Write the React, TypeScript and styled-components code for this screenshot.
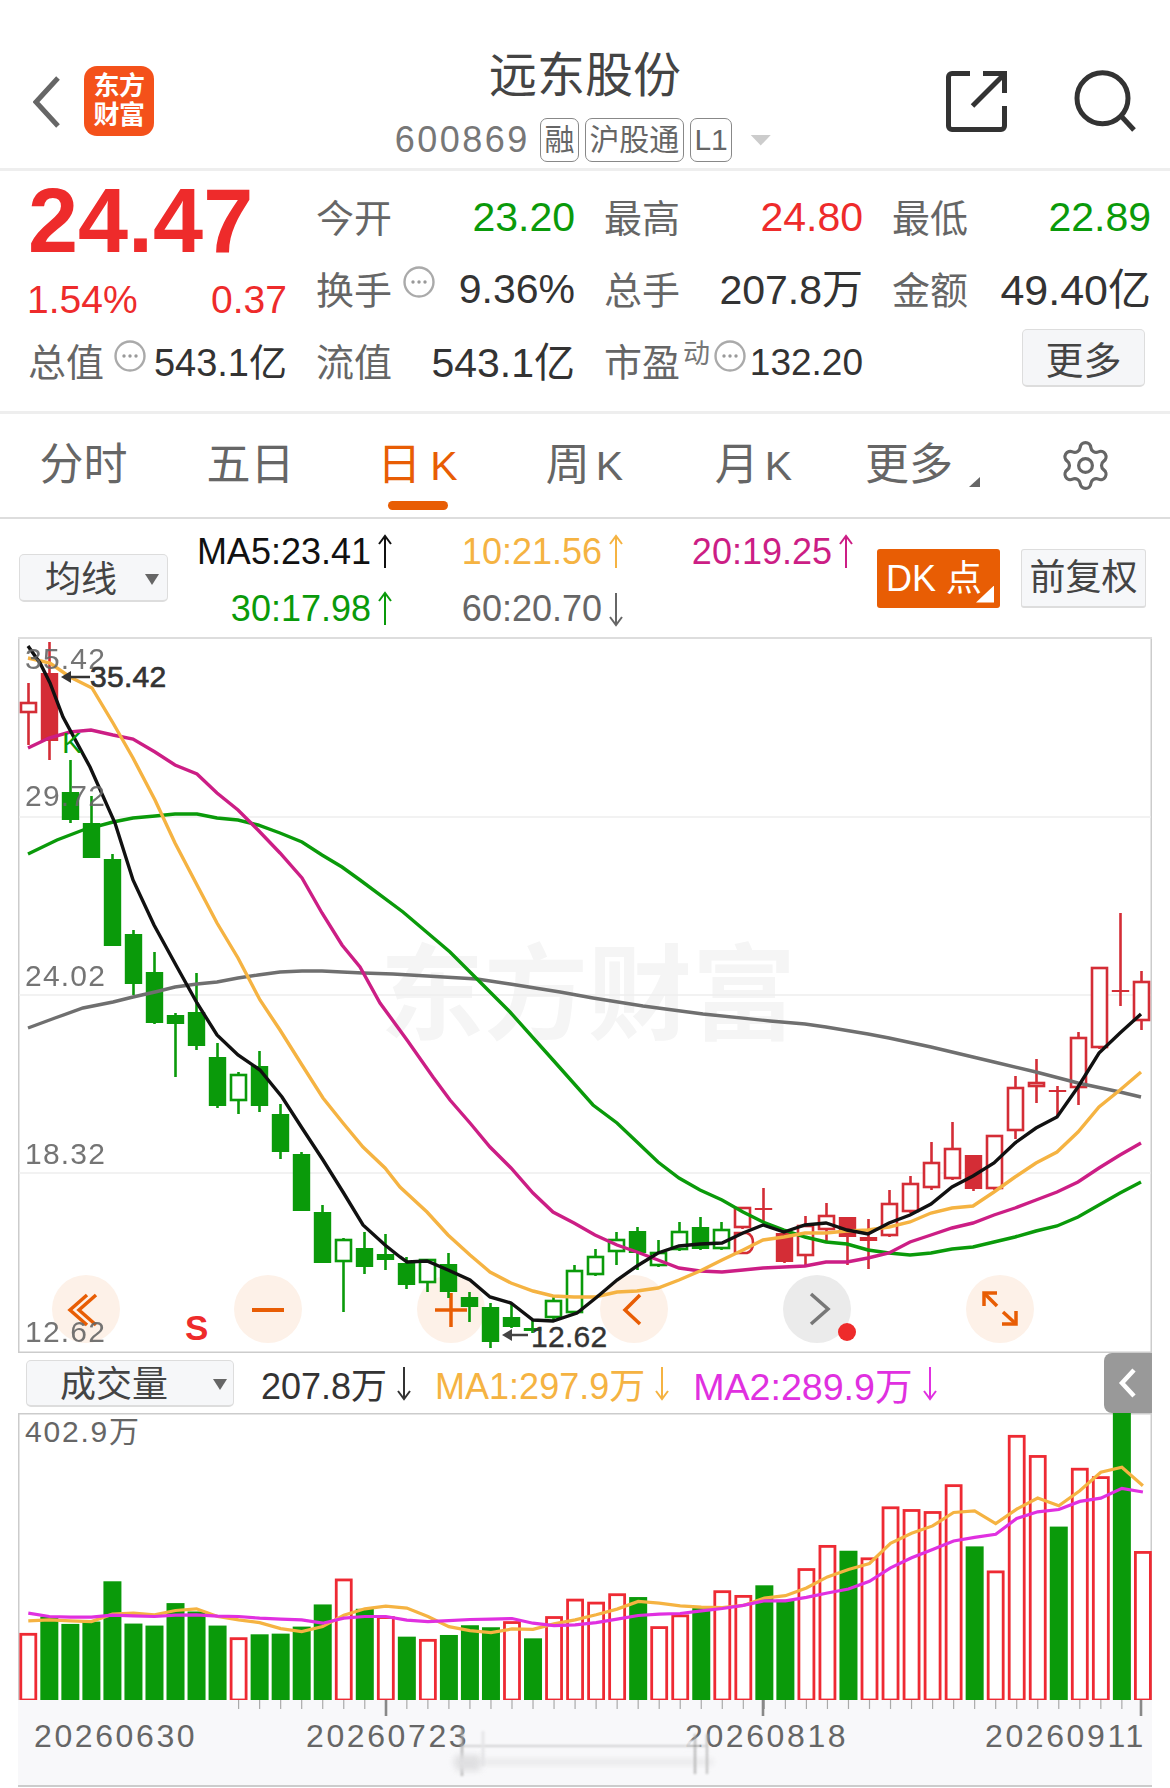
import React from "react";
import styled, { createGlobalStyle } from "styled-components";
import { Settings } from "lucide-react";

const FONT = `"Liberation Sans", "Noto Sans CJK SC", sans-serif`;
const ORANGE = "#e85d04";
const GREEN = "#0a9a0a";
const RED = "#ee2b2b";
const MA_ORANGE = "#f5b342";
const MA_PINK = "#cc1e85";
const MA_VIOLET = "#e030e0";

const GlobalStyle = createGlobalStyle`
  html, body { margin: 0; padding: 0; background: #fff; }
  body { font-family: ${FONT}; }
  * { box-sizing: border-box; }
`;

const Page = styled.div`
  width: 1170px;
  height: 1788px;
  background: #fff;
  overflow: hidden;
  color: #333;
`;

/* ---------- header ---------- */
const Header = styled.header`
  height: 171px;
  padding-top: 51px;
  display: grid;
  grid-template-columns: 1fr auto 1fr;
  border-bottom: 3px solid #eee;
`;
const HeaderLeft = styled.div`
  display: flex;
  align-items: flex-start;
  padding-left: 33px;
  gap: 24px;
`;
const BackIcon = styled.svg`
  margin-top: 25px;
  width: 27px;
  height: 52px;
`;
const Logo = styled.div`
  margin-top: 15px;
  width: 70px;
  height: 70px;
  border-radius: 13px;
  background: #f4511a;
  color: #fff;
  font-size: 26px;
  line-height: 29px;
  font-weight: 700;
  display: flex;
  flex-direction: column;
  align-items: center;
  justify-content: center;
  letter-spacing: -0.5px;
`;
const TitleBlock = styled.div`
  display: flex;
  flex-direction: column;
  align-items: center;
`;
const Title = styled.h1`
  margin: 0;
  font-size: 48px;
  line-height: 50px;
  font-weight: 400;
  color: #444;
`;
const CodeRow = styled.div`
  margin: 17px 0 0 -4px;
  display: flex;
  align-items: center;
  gap: 6px;
`;
const Code = styled.span`
  font-size: 36px;
  letter-spacing: 2.5px;
  color: #777;
  margin-right: 4px;
`;
const Badge = styled.span`
  height: 44px;
  border: 1.5px solid #888;
  border-radius: 7px;
  font-size: 30px;
  line-height: 41px;
  padding: 0 3.5px;
  color: #666;
`;
const DropTriangle = styled.span`
  width: 21px;
  height: 11px;
  margin-left: 12px;
  background: #ccc;
  clip-path: polygon(0 0, 100% 0, 50% 100%);
`;
const HeaderRight = styled.div`
  display: flex;
  justify-content: flex-end;
  gap: 60px;
  padding: 14px 30px 0 0;
`;
const HeaderIcon = styled.svg`
  width: 70px;
  height: 70px;
`;

/* ---------- quote ---------- */
const Quote = styled.section`
  height: 243px;
  padding: 10px 0 0 28px;
  display: grid;
  grid-template-columns: repeat(4, 259px);
  column-gap: 29px;
  grid-auto-rows: 72px;
  border-bottom: 3px solid #eee;
`;
const Price = styled.div`
  font-size: 90px;
  font-weight: 700;
  line-height: 71px;
  color: ${RED};
  padding-top: 5px;
`;
const ChangeCell = styled.div`
  display: flex;
  justify-content: space-between;
  align-items: center;
  padding-top: 22px;
  margin-left: -1px;
  font-size: 39px;
  color: ${RED};
`;
const Cell = styled.div`
  display: flex;
  justify-content: space-between;
  align-items: center;
`;
const LabelGroup = styled.div`
  display: flex;
  align-items: center;
`;
const Label = styled.span`
  font-size: 38px;
  color: #666;
  white-space: nowrap;
  transform: translateY(-2.5px);
`;
const Value = styled.span<{ $color?: string; $size?: number; $shift?: number }>`
  font-size: ${(p) => p.$size ?? 41}px;
  color: ${(p) => p.$color ?? "#333"};
  white-space: nowrap;
  transform: translateY(${(p) => p.$shift ?? 0}px);
`;
const InfoIcon = styled.svg<{ $left: number; $lift: number }>`
  width: 32px;
  height: 32px;
  margin-left: ${(p) => p.$left}px;
  margin-bottom: ${(p) => p.$lift}px;
`;
const SupMark = styled.span`
  font-size: 27px;
  color: #777;
  margin: 0 4px 20px 3px;
`;
const MoreButton = styled.button`
  justify-self: end;
  align-self: start;
  margin: 4px 6px 0 0;
  width: 123px;
  height: 58px;
  background: #f5f6f8;
  border: 1.5px solid #ddd;
  border-bottom-width: 2.5px;
  border-radius: 5px;
  font: 38px ${FONT};
  color: #444;
  padding: 0;
`;

/* ---------- tabs ---------- */
const Tabs = styled.nav`
  height: 105px;
  display: grid;
  grid-template-columns: repeat(7, 167px);
  padding-top: 31px;
  border-bottom: 2.5px solid #ddd;
`;
const Tab = styled.div<{ $nudge?: number }>`
  display: flex;
  flex-direction: column;
  align-items: center;
  margin-left: ${(p) => p.$nudge ?? 0}px;
`;
const TabLabel = styled.div<{ $active?: boolean }>`
  display: flex;
  align-items: baseline;
  height: 40px;
  line-height: 40px;
  font-size: 44px;
  color: ${(p) => (p.$active ? ORANGE : "#666")};
`;
const TabK = styled.span<{ $gap: number }>`
  font-size: 41px;
  margin-left: ${(p) => p.$gap}px;
`;
const TabCorner = styled.span`
  align-self: flex-end;
  width: 11px;
  height: 10px;
  margin: 0 0 -2px 16px;
  background: #666;
  clip-path: polygon(100% 0, 100% 100%, 0 100%);
`;
const TabMark = styled.div`
  margin-top: 16px;
  width: 60px;
  height: 9px;
  border-radius: 4.5px;
  background: ${ORANGE};
`;
const GearSlot = styled.div`
  display: flex;
  justify-content: center;
  margin-top: -7px;
  color: #666;
`;

/* ---------- legend ---------- */
const LegendBar = styled.div`
  height: 118px;
  display: flex;
  align-items: center;
  padding: 0 0 0 19px;
`;
const SelectBox = styled.div<{ $w: number; $h: number; $pad: number }>`
  width: ${(p) => p.$w}px;
  height: ${(p) => p.$h}px;
  background: #f6f7f9;
  border: 1.5px solid #ddd;
  border-bottom-width: 2.5px;
  border-radius: 5px;
  font-size: 36px;
  line-height: 42px;
  color: #444;
  padding: 4px 0 0 ${(p) => p.$pad}px;
  display: flex;
  align-items: center;
  flex: none;
`;
const SelectCaret = styled.span<{ $left: number }>`
  width: 14px;
  height: 11px;
  margin-left: ${(p) => p.$left}px;
  background: #666;
  clip-path: polygon(0 0, 100% 0, 50% 100%);
`;
const Legend = styled.div`
  width: 687px;
  margin-top: 4px;
  display: grid;
  grid-template-columns: 226px 231px 230px;
  grid-auto-rows: 57px;
`;
const LegendItem = styled.div<{ $color: string }>`
  display: flex;
  justify-content: flex-end;
  align-items: center;
  gap: 5px;
  font-size: 36px;
  color: ${(p) => p.$color};
  white-space: nowrap;
`;
const ArrowSvg = styled.svg`
  width: 18px;
  height: 36px;
  flex: none;
`;
const DkButton = styled.div`
  position: relative;
  margin-left: 22px;
  width: 123px;
  height: 59px;
  background: ${ORANGE};
  border-radius: 3px;
  color: #fff;
  font-size: 36px;
  line-height: 59px;
  padding-left: 9px;
  white-space: nowrap;
  &::after {
    content: "";
    position: absolute;
    right: 6px;
    bottom: 5px;
    width: 18px;
    height: 17px;
    background: #fff;
    clip-path: polygon(100% 0, 100% 100%, 0 100%);
  }
`;
const AdjustButton = styled.div`
  margin-left: 21px;
  width: 125px;
  height: 59px;
  background: #f6f7f9;
  border: 1.5px solid #ddd;
  border-bottom-width: 2.5px;
  border-radius: 3px;
  font-size: 36px;
  line-height: 55px;
  text-align: center;
  color: #444;
`;

/* ---------- price chart ---------- */
const ChartBox = styled.div`
  position: relative;
  margin-left: 18px;
  width: 1134px;
  height: 716px;
  box-shadow: inset 0 2px 0 #ddd, inset 1.5px 0 0 #ccc, inset -1.5px 0 0 #ccc, inset 0 -1.5px 0 #ccc;
`;
const ChartSvg = styled.svg`
  display: block;
  position: relative;
  z-index: 1;
`;
const RoundButton = styled.div<{ $x: number; $gray?: boolean }>`
  position: absolute;
  left: ${(p) => p.$x}px;
  top: 638px;
  width: 68px;
  height: 68px;
  border-radius: 50%;
  background: ${(p) => (p.$gray ? "#ebebeb" : "#fdf1e8")};
`;
const RoundIcon = styled.svg`
  display: block;
  width: 68px;
  height: 68px;
`;
const AxisText = styled.text`
  font-family: ${FONT};
  font-size: 30px;
  letter-spacing: 1.2px;
  fill: #666;
  opacity: 0.9;
`;
const MarkText = styled.text`
  font-family: ${FONT};
  font-size: 30px;
  fill: #333;
  letter-spacing: 0.3px;
`;
const SignalText = styled.text<{ $color: string; $size: number; $bold?: boolean }>`
  font-family: ${FONT};
  font-size: ${(p) => p.$size}px;
  font-weight: ${(p) => (p.$bold ? 700 : 400)};
  fill: ${(p) => p.$color};
`;
const Watermark = styled.text`
  font-family: ${FONT};
  font-size: 104px;
  font-weight: 700;
  fill: #f5f5f5;
`;

/* ---------- volume ---------- */
const VolumeBar = styled.div`
  position: relative;
  height: 60px;
  width: 1152px;
  display: flex;
  align-items: center;
  padding-left: 26px;
`;
const VolumeItem = styled.div<{ $color: string; $left: number; $size?: number }>`
  display: flex;
  align-items: center;
  gap: 8px;
  margin-left: ${(p) => p.$left}px;
  font-size: ${(p) => p.$size ?? 36}px;
  color: ${(p) => p.$color};
  white-space: nowrap;
`;
const CollapseTab = styled.div`
  position: absolute;
  right: 0;
  top: 0;
  z-index: 2;
  width: 48px;
  height: 60px;
  background: #999;
  border-radius: 8px 0 0 8px;
  display: flex;
  align-items: center;
  justify-content: center;
`;
const CollapseIcon = styled.svg`
  width: 20px;
  height: 32px;
`;
const VolumeBox = styled.div`
  margin-left: 18px;
  width: 1134px;
  height: 287px;
  box-shadow: inset 0 1.5px 0 #ccc, inset 1.5px 0 0 #ccc, inset -1.5px 0 0 #ccc;
`;
const VolumeSvg = styled.svg`
  display: block;
`;
const VolumeMax = styled.text`
  font-family: ${FONT};
  font-size: 30px;
  letter-spacing: 1.8px;
  fill: #666;
`;
const AxisFooter = styled.footer`
  position: relative;
  margin-left: 18px;
  width: 1134px;
  height: 87px;
  background: #f8f8fa;
  border-bottom: 2px solid #ccc;
`;
const TicksSvg = styled.svg`
  display: block;
`;
const Dates = styled.div`
  margin-top: 2px;
  padding-left: 16px;
  display: grid;
  grid-template-columns: 272px 379px 300px auto;
  font-size: 32px;
  line-height: 34px;
  letter-spacing: 2.6px;
  color: #666;
`;
const Slider = styled.svg`
  position: absolute;
  left: 424px;
  top: 21px;
  width: 300px;
  height: 64px;
  opacity: 0.85;
`;

/* ---------- data ---------- */
type Candle = [number, number, number, number, "r" | "R" | "g" | "G"]; // wickTop, bodyTop, bodyBottom, wickBottom, kind (upper = filled)
const candles: Candle[] = [
  [683, 702, 713, 745, "r"], [642, 673, 741, 760, "R"], [760, 792, 820, 823, "G"], [796, 823, 858, 858, "G"],
  [854, 859, 946, 946, "G"], [930, 934, 984, 995, "G"], [952, 972, 1023, 1024, "G"], [1013, 1015, 1024, 1077, "G"],
  [973, 1012, 1046, 1050, "G"], [1043, 1057, 1106, 1108, "G"], [1072, 1074, 1101, 1114, "g"], [1051, 1066, 1106, 1112, "G"],
  [1104, 1114, 1152, 1159, "G"], [1152, 1154, 1211, 1211, "G"], [1205, 1212, 1263, 1263, "G"], [1238, 1239, 1262, 1312, "g"],
  [1232, 1248, 1267, 1274, "G"], [1234, 1254, 1260, 1270, "G"], [1257, 1263, 1285, 1289, "G"], [1259, 1259, 1283, 1292, "g"],
  [1253, 1264, 1292, 1298, "G"], [1292, 1297, 1307, 1322, "G"], [1303, 1307, 1342, 1348, "G"], [1303, 1317, 1327, 1328, "G"],
  [1320, 1328, 1331, 1333, "G"], [1297, 1300, 1318, 1322, "g"], [1265, 1270, 1313, 1314, "g"], [1249, 1256, 1275, 1276, "g"],
  [1232, 1239, 1252, 1265, "g"], [1227, 1231, 1253, 1270, "G"], [1240, 1252, 1266, 1267, "g"], [1222, 1231, 1250, 1251, "g"],
  [1217, 1227, 1249, 1250, "G"], [1222, 1229, 1249, 1250, "g"], [1207, 1207, 1228, 1229, "r"], [1188, 1208, 1210, 1222, "R"],
  [1233, 1233, 1262, 1263, "R"], [1216, 1225, 1256, 1267, "r"], [1203, 1215, 1230, 1243, "r"], [1217, 1217, 1237, 1265, "R"],
  [1219, 1237, 1241, 1269, "R"], [1190, 1203, 1236, 1237, "r"], [1176, 1183, 1212, 1213, "r"], [1142, 1162, 1188, 1190, "r"],
  [1122, 1148, 1179, 1180, "r"], [1155, 1155, 1189, 1191, "R"], [1135, 1135, 1189, 1190, "r"], [1076, 1087, 1131, 1139, "r"],
  [1059, 1082, 1087, 1103, "r"], [1086, 1090, 1092, 1117, "R"], [1032, 1037, 1088, 1105, "r"], [967, 967, 1048, 1049, "r"],
  [913, 990, 992, 1006, "R"], [971, 981, 1021, 1030, "r"],
];

const pts = (list: number[][]) => list.map((p) => p.join(",")).join(" ");

const maBlack = [[28,646],[40,663],[50,683],[63,717],[90,767],[115,823],[133,880],[154,925],[177,967],[197,1003],[217,1035],[238,1055],[260,1070],[282,1097],[302,1128],[323,1160],[343,1192],[363,1225],[385,1245],[400,1257],[407,1262],[427,1261],[448,1270],[470,1280],[490,1297],[511,1303],[533,1320],[553,1321],[577,1313],[597,1297],[617,1280],[637,1266],[658,1253],[679,1246],[700,1244],[722,1243],[743,1233],[763,1225],[784,1232],[805,1225],[826,1223],[847,1230],[868,1234],[889,1223],[910,1215],[931,1204],[952,1187],[973,1176],[994,1163],[1015,1143],[1036,1128],[1057,1117],[1078,1087],[1099,1053],[1120,1033],[1141,1014]];
const maOrange = [[28,658],[50,663],[70,677],[92,688],[113,723],[133,758],[155,800],[175,843],[197,885],[217,923],[238,958],[260,1000],[280,1030],[302,1065],[323,1098],[343,1123],[363,1147],[385,1168],[400,1187],[427,1212],[448,1235],[470,1255],[490,1272],[511,1283],[533,1291],[553,1296],[574,1297],[595,1297],[617,1292],[637,1291],[658,1288],[679,1280],[700,1271],[722,1260],[743,1250],[763,1240],[784,1237],[805,1233],[826,1233],[847,1231],[868,1230],[889,1227],[910,1222],[931,1213],[952,1208],[973,1206],[994,1192],[1015,1177],[1036,1163],[1057,1152],[1078,1132],[1099,1107],[1120,1090],[1141,1072]];
const maPink = [[28,748],[49,738],[70,732],[91,730],[113,735],[133,739],[155,752],[175,765],[197,774],[217,793],[238,810],[258,830],[280,853],[302,878],[322,913],[342,945],[360,967],[380,1003],[407,1040],[433,1077],[450,1100],[470,1123],[490,1147],[511,1168],[533,1193],[553,1212],[574,1223],[595,1235],[617,1245],[637,1252],[658,1260],[679,1268],[700,1271],[722,1272],[743,1270],[763,1268],[784,1267],[805,1266],[826,1262],[847,1262],[868,1258],[889,1253],[910,1242],[931,1235],[952,1228],[973,1223],[994,1215],[1015,1208],[1036,1200],[1057,1192],[1078,1182],[1099,1168],[1120,1155],[1141,1143]];
const maGreen = [[28,854],[57,840],[83,830],[113,822],[133,818],[155,816],[175,814],[197,814],[217,818],[238,820],[258,825],[280,833],[302,842],[322,855],[342,867],[360,880],[403,912],[450,952],[477,979],[510,1012],[553,1060],[593,1105],[617,1123],[637,1142],[658,1162],[679,1178],[700,1190],[722,1200],[743,1212],[763,1222],[784,1230],[805,1237],[826,1242],[847,1244],[868,1250],[889,1253],[910,1255],[931,1253],[952,1249],[973,1247],[994,1242],[1015,1237],[1036,1231],[1057,1226],[1078,1217],[1099,1205],[1120,1193],[1141,1182]];
const maGray = [[28,1028],[55,1018],[83,1008],[113,1002],[133,997],[155,992],[175,987],[197,984],[217,982],[238,978],[258,975],[280,972],[302,971],[322,971],[342,972],[363,973],[393,974],[427,976],[477,979],[510,984],[560,992],[593,998],[643,1006],[703,1014],[770,1021],[805,1024],[826,1027],[868,1034],[889,1038],[931,1047],[973,1057],[994,1062],[1036,1072],[1078,1083],[1120,1092],[1141,1097]];

// volume tops, in raw sample units: y = 1340 + v / 2.98
const volumes: [number, "r" | "g"][] = [
  [880,"r"],[830,"g"],[852,"g"],[845,"g"],[725,"g"],[851,"g"],[857,"g"],[790,"g"],[815,"g"],[857,"g"],
  [893,"r"],[883,"g"],[881,"g"],[860,"g"],[794,"g"],[718,"r"],[807,"g"],[830,"r"],[890,"g"],[898,"r"],
  [885,"g"],[856,"g"],[862,"g"],[845,"r"],[895,"g"],[830,"r"],[778,"r"],[787,"r"],[762,"r"],[772,"g"],
  [860,"r"],[825,"r"],[805,"g"],[753,"r"],[767,"r"],[737,"g"],[780,"g"],[687,"r"],[618,"r"],[634,"g"],
  [655,"r"],[503,"r"],[511,"r"],[517,"r"],[437,"r"],[621,"g"],[694,"r"],[290,"r"],[350,"r"],[562,"g"],
  [388,"r"],[413,"r"],[217,"g"],[636,"r"],
];
const volOrange = [843,840,843,845,823,820,825,812,807,830,840,848,866,875,860,826,807,799,805,830,860,872,878,867,868,852,840,825,808,785,790,798,802,803,797,775,768,745,712,690,672,612,582,560,520,515,553,510,477,500,455,400,385,440];
const volPink = [820,830,832,832,826,828,830,826,825,829,830,835,838,840,850,835,830,830,841,845,842,839,838,836,850,857,855,848,838,827,823,821,813,806,797,783,783,773,760,748,725,685,655,630,605,594,585,538,518,511,487,477,448,459];

const volX = (k: number) => 28.3 + 21.03 * k;
const volY = (v: number) => 1340 + v / 2.98;
const volLine = (a: number[]) => a.map((v, k) => `${volX(k).toFixed(1)},${volY(v).toFixed(1)}`).join(" ");

/* ---------- small drawings ---------- */
const Arrow: React.FC<{ down?: boolean; color: string }> = ({ down, color }) => (
  <ArrowSvg viewBox="0 0 18 36" fill="none" stroke={color} strokeWidth={2}>
    <line x1={9} y1={2} x2={9} y2={34} />
    {down ? <polyline points="3,26 9,34 15,26" /> : <polyline points="3,10 9,2 15,10" />}
  </ArrowSvg>
);

const Info: React.FC<{ left: number; lift: number }> = ({ left, lift }) => (
  <InfoIcon $left={left} $lift={lift} viewBox="0 0 32 32">
    <circle cx={16} cy={16} r={14.5} fill="none" stroke="#aaa" strokeWidth={2.4} />
    <circle cx={10} cy={16} r={1.7} fill="#999" />
    <circle cx={16} cy={16} r={1.7} fill="#999" />
    <circle cx={22} cy={16} r={1.7} fill="#999" />
  </InfoIcon>
);

const CandleMark: React.FC<{ c: Candle; k: number }> = ({ c, k }) => {
  const [wt, bt, bb, wb, kind] = c;
  const x = 28.5 + 21 * k;
  const color = kind === "r" || kind === "R" ? "#d42d36" : GREEN;
  const filled = kind === "R" || kind === "G";
  return (
    <g>
      <line x1={x} y1={wt} x2={x} y2={wb} stroke={color} strokeWidth={2.6} />
      {filled ? (
        <rect x={x - 8.7} y={bt} width={17.4} height={Math.max(bb - bt, 2)} fill={color} />
      ) : (
        <rect x={x - 7.5} y={bt + 1} width={15} height={Math.max(bb - bt - 2, 1)} fill="#fff" stroke={color} strokeWidth={2.6} />
      )}
    </g>
  );
};

const ticks = Array.from({ length: 43 }, (_, i) => i + 10);

export default function App() {
  return (
    <Page>
      <GlobalStyle />
      <Header>
        <HeaderLeft>
          <BackIcon viewBox="0 0 27 52" fill="none" stroke="#666" strokeWidth={5}>
            <polyline points="25,2 3,26 25,50" />
          </BackIcon>
          <Logo>
            <span>东方</span>
            <span>财富</span>
          </Logo>
        </HeaderLeft>
        <TitleBlock>
          <Title>远东股份</Title>
          <CodeRow>
            <Code>600869</Code>
            <Badge>融</Badge>
            <Badge>沪股通</Badge>
            <Badge>L1</Badge>
            <DropTriangle />
          </CodeRow>
        </TitleBlock>
        <HeaderRight>
          <HeaderIcon viewBox="0 0 70 70" fill="none" stroke="#333" strokeWidth={5}>
            <path d="M30 8.5H12a3.5 3.5 0 0 0-3.5 3.5V61a3.5 3.5 0 0 0 3.5 3.5H61a3.5 3.5 0 0 0 3.5-3.5V41" />
            <path d="M43 8.5H64.5V28" />
            <path d="M32.5 41L64 9.5" />
          </HeaderIcon>
          <HeaderIcon viewBox="0 0 70 70" fill="none" stroke="#333" strokeWidth={5}>
            <circle cx={32.5} cy={33.3} r={25.5} />
            <path d="M52 52L64 65" />
          </HeaderIcon>
        </HeaderRight>
      </Header>

      <Quote>
        <Price>24.47</Price>
        <Cell>
          <Label>今开</Label>
          <Value $color={GREEN}>23.20</Value>
        </Cell>
        <Cell>
          <Label>最高</Label>
          <Value $color={RED}>24.80</Value>
        </Cell>
        <Cell>
          <Label>最低</Label>
          <Value $color={GREEN}>22.89</Value>
        </Cell>

        <ChangeCell>
          <span>1.54%</span>
          <span>0.37</span>
        </ChangeCell>
        <Cell>
          <LabelGroup>
            <Label>换手</Label>
            <Info left={11} lift={14} />
          </LabelGroup>
          <Value>9.36%</Value>
        </Cell>
        <Cell>
          <Label>总手</Label>
          <Value $shift={-3}>207.8万</Value>
        </Cell>
        <Cell>
          <Label>金额</Label>
          <Value $size={43} $shift={-3}>49.40亿</Value>
        </Cell>

        <Cell>
          <LabelGroup>
            <Label>总值</Label>
            <Info left={10} lift={11} />
          </LabelGroup>
          <Value $size={38} $shift={-2}>543.1亿</Value>
        </Cell>
        <Cell>
          <Label>流值</Label>
          <Value $shift={-2}>543.1亿</Value>
        </Cell>
        <Cell>
          <LabelGroup>
            <Label>市盈</Label>
            <SupMark>动</SupMark>
            <Info left={0} lift={11} />
          </LabelGroup>
          <Value $size={37} $shift={2}>132.20</Value>
        </Cell>
        <MoreButton>更多</MoreButton>
      </Quote>

      <Tabs>
        <Tab><TabLabel>分时</TabLabel></Tab>
        <Tab><TabLabel>五日</TabLabel></Tab>
        <Tab>
          <TabLabel $active>日<TabK $gap={9}>K</TabK></TabLabel>
          <TabMark />
        </Tab>
        <Tab><TabLabel>周<TabK $gap={6}>K</TabK></TabLabel></Tab>
        <Tab $nudge={4}><TabLabel>月<TabK $gap={6}>K</TabK></TabLabel></Tab>
        <Tab $nudge={8}><TabLabel>更多<TabCorner /></TabLabel></Tab>
        <GearSlot><Settings size={55} strokeWidth={1.4} /></GearSlot>
      </Tabs>

      <LegendBar>
        <SelectBox $w={149} $h={48} $pad={25}>
          均线<SelectCaret $left={28} />
        </SelectBox>
        <Legend>
          <LegendItem $color="#111">MA5:23.41<Arrow color="#111" /></LegendItem>
          <LegendItem $color={MA_ORANGE}>10:21.56<Arrow color={MA_ORANGE} /></LegendItem>
          <LegendItem $color={MA_PINK}>20:19.25<Arrow color={MA_PINK} /></LegendItem>
          <LegendItem $color={GREEN}>30:17.98<Arrow color={GREEN} /></LegendItem>
          <LegendItem $color="#666">60:20.70<Arrow down color="#666" /></LegendItem>
        </Legend>
        <DkButton>DK 点</DkButton>
        <AdjustButton>前复权</AdjustButton>
      </LegendBar>

      <ChartBox>
        <RoundButton $x={34}>
          <RoundIcon viewBox="0 0 68 68" fill="none" stroke={ORANGE} strokeWidth={3.5}>
            <polyline points="35,20 18,35 35,50" />
            <polyline points="44,20 27,35 44,50" />
          </RoundIcon>
        </RoundButton>
        <RoundButton $x={216}>
          <RoundIcon viewBox="0 0 68 68" fill="none" stroke={ORANGE} strokeWidth={4}>
            <line x1={18} y1={35} x2={50} y2={35} />
          </RoundIcon>
        </RoundButton>
        <RoundButton $x={399}>
          <RoundIcon viewBox="0 0 68 68" fill="none" stroke={ORANGE} strokeWidth={3.5}>
            <line x1={18} y1={35} x2={50} y2={35} />
            <line x1={34} y1={18} x2={34} y2={52} />
          </RoundIcon>
        </RoundButton>
        <RoundButton $x={582}>
          <RoundIcon viewBox="0 0 68 68" fill="none" stroke={ORANGE} strokeWidth={3.5}>
            <polyline points="40,20 25,35 40,49" />
          </RoundIcon>
        </RoundButton>
        <RoundButton $x={765} $gray>
          <RoundIcon viewBox="0 0 68 68" fill="none" stroke="#777" strokeWidth={3.5}>
            <polyline points="28,19 45,34 28,49" />
          </RoundIcon>
        </RoundButton>
        <RoundButton $x={948}>
          <RoundIcon viewBox="0 0 68 68" fill="none" stroke={ORANGE} strokeWidth={3.5}>
            <polyline points="31,18 18,18 18,31" />
            <line x1={19} y1={19} x2={31} y2={31} />
            <polyline points="36,49 50,49 50,36" />
            <line x1={37} y1={37} x2={49} y2={48} />
          </RoundIcon>
        </RoundButton>

        <ChartSvg width={1134} height={716} viewBox="18 637 1134 716">
          <Watermark x={380} y={1032}>东方财富</Watermark>
          {[817, 995, 1173].map((y) => (
            <line key={y} x1={19} y1={y} x2={1151} y2={y} stroke="#eee" strokeWidth={1.6} />
          ))}
          {candles.map((c, k) => (
            <CandleMark key={k} c={c} k={k} />
          ))}
          <path d="M735 1233H747Q753 1235 753 1243Q753 1251 747 1253H735Z" fill="none" stroke="#d42d36" strokeWidth={2.6} />
          <polyline points={pts(maGray)} fill="none" stroke="#6f6f6f" strokeWidth={3.4} />
          <polyline points={pts(maGreen)} fill="none" stroke={GREEN} strokeWidth={3.4} />
          <polyline points={pts(maPink)} fill="none" stroke={MA_PINK} strokeWidth={3.4} />
          <polyline points={pts(maOrange)} fill="none" stroke={MA_ORANGE} strokeWidth={3.4} />
          <polyline points={pts(maBlack)} fill="none" stroke="#111" strokeWidth={3.4} />
          <circle cx={847} cy={1332} r={9} fill={RED} />

          <AxisText x={25} y={669}>35.42</AxisText>
          <AxisText x={25} y={806}>29.72</AxisText>
          <AxisText x={25} y={986}>24.02</AxisText>
          <AxisText x={25} y={1164}>18.32</AxisText>
          <AxisText x={25} y={1342}>12.62</AxisText>

          <line x1={66} y1={677} x2={90} y2={677} stroke="#333" strokeWidth={2.5} />
          <polygon points="61,677 71,671 71,683" fill="#333" />
          <MarkText x={90} y={687} stroke="#333" strokeWidth={0.7}>35.42</MarkText>
          <line x1={507} y1={1335} x2={528} y2={1335} stroke="#444" strokeWidth={2.5} />
          <polygon points="502,1335 512,1329 512,1341" fill="#444" />
          <MarkText x={531} y={1347} stroke="#333" strokeWidth={0.4}>12.62</MarkText>

          <SignalText x={62} y={753} $color={GREEN} $size={30}>K</SignalText>
          <SignalText x={185} y={1340} $color={RED} $size={35} $bold>S</SignalText>
        </ChartSvg>
      </ChartBox>

      <VolumeBar>
        <SelectBox $w={208} $h={47} $pad={33}>
          成交量<SelectCaret $left={45} />
        </SelectBox>
        <VolumeItem $color="#333" $left={27}>207.8万<Arrow down color="#333" /></VolumeItem>
        <VolumeItem $color={MA_ORANGE} $left={22}>MA1:297.9万<Arrow down color={MA_ORANGE} /></VolumeItem>
        <VolumeItem $color={MA_VIOLET} $left={22} $size={37.6}>MA2:289.9万<Arrow down color={MA_VIOLET} /></VolumeItem>
        <CollapseTab>
          <CollapseIcon viewBox="0 0 20 32" fill="none" stroke="#fff" strokeWidth={4.5}>
            <polyline points="16,3 4,16 16,29" />
          </CollapseIcon>
        </CollapseTab>
      </VolumeBar>

      <VolumeBox>
        <VolumeSvg width={1134} height={287} viewBox="18 1415 1134 287">
          {volumes.map(([v, kind], k) => {
            const top = volY(v);
            return kind === "g" ? (
              <rect key={k} x={volX(k) - 9} y={top} width={18} height={1702 - top} fill={GREEN} />
            ) : (
              <rect key={k} x={volX(k) - 7.5} y={top + 1} width={15} height={1701 - top} fill="#fff" stroke="#ee2a33" strokeWidth={2.8} />
            );
          })}
          <polyline points={volLine(volOrange)} fill="none" stroke={MA_ORANGE} strokeWidth={3.2} />
          <polyline points={volLine(volPink)} fill="none" stroke={MA_VIOLET} strokeWidth={3.2} />
          <VolumeMax x={25} y={1444}>402.9万</VolumeMax>
        </VolumeSvg>
      </VolumeBox>

      <AxisFooter>
        <TicksSvg width={1134} height={17} viewBox="18 1702 1134 17">
          {ticks.map((k) => (
            <line key={k} x1={volX(k)} y1={1702} x2={volX(k)} y2={1711} stroke="#aaa" strokeWidth={1.2} />
          ))}
          {[386, 763, 1141].map((x) => (
            <line key={x} x1={x} y1={1702} x2={x} y2={1718} stroke="#888" strokeWidth={2.6} />
          ))}
        </TicksSvg>
        <Dates>
          <span>20260630</span>
          <span>20260723</span>
          <span>20260818</span>
          <span>20260911</span>
        </Dates>
        <Slider viewBox="0 0 300 64" fill="none">
          <defs>
            <filter id="soft" filterUnits="userSpaceOnUse" x="0" y="0" width="300" height="64">
              <feGaussianBlur stdDeviation="1" />
            </filter>
            <filter id="softer" filterUnits="userSpaceOnUse" x="0" y="0" width="300" height="64">
              <feGaussianBlur stdDeviation="3" />
            </filter>
          </defs>
          <rect x={243} y={19} width={15} height={11} fill="#f8f8fa" filter="url(#soft)" />
          <line x1={18} y1={25} x2={265} y2={25} stroke="#bbb" strokeWidth={1.6} filter="url(#soft)" />
          <line x1={11} y1={41} x2={271} y2={41} stroke="#e0e0e2" strokeWidth={5} filter="url(#softer)" />
          <line x1={20} y1={8} x2={20} y2={55} stroke="#aaa" strokeWidth={2.4} filter="url(#soft)" />
          <line x1={41} y1={10} x2={41} y2={45} stroke="#e2e2e4" strokeWidth={3} filter="url(#soft)" />
          <line x1={253} y1={13} x2={253} y2={53} stroke="#aaa" strokeWidth={2.2} filter="url(#soft)" />
          <line x1={265} y1={13} x2={265} y2={53} stroke="#b8b8b8" strokeWidth={2.2} filter="url(#soft)" />
          <rect x={14} y={34} width={24} height={16} fill="#dcdcde" filter="url(#softer)" />
        </Slider>
      </AxisFooter>
    </Page>
  );
}
